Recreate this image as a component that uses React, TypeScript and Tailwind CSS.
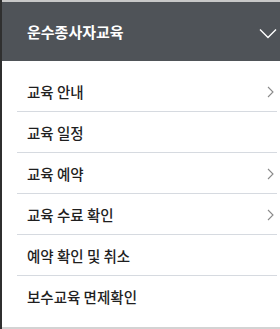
import React from "react";

const items: { label: string; arrow: boolean }[] = [
  { label: "교육 안내", arrow: true },
  { label: "교육 일정", arrow: false },
  { label: "교육 예약", arrow: true },
  { label: "교육 수료 확인", arrow: true },
  { label: "예약 확인 및 취소", arrow: false },
  { label: "보수교육 면제확인", arrow: false },
];

export default function App() {
  return (
    <div
      className="flex w-[280px] h-[329px] bg-white overflow-hidden"
      style={{ fontFamily: '"Noto Sans CJK KR", "Noto Sans", sans-serif' }}
    >
      <div className="w-[2px] shrink-0 bg-[#2f2f2f]" />
      <div className="flex flex-col flex-1 min-w-0">
        <div className="h-[2px] bg-[#c8c8c8]" />
        <div className="h-[59px] bg-[#4f5358] flex items-center justify-between pl-[25px] pr-[3px]">
          <span className="text-white font-bold text-[15px] leading-none">
            운수종사자교육
          </span>
          <svg width="18" height="11" viewBox="0 0 18 11" className="mt-[3px]">
            <path d="M1 1.5 L9 9.5 L17 1.5" fill="none" stroke="#ffffff" strokeWidth="1.4" />
          </svg>
        </div>
        <div className="flex flex-col pt-[10px] pb-[10px] border-b-2 border-[#d3d3d3]">
          {items.map((it, i) => (
            <div
              key={it.label}
              className={`ml-[15px] mr-[3px] h-[41px] flex items-center justify-between pl-[10px] ${
                i < items.length - 1 ? "border-b border-[#d6dae0]" : ""
              }`}
            >
              <span className="text-[14.5px] font-medium text-[#1f1f1f] leading-none pt-[2px]">{it.label}</span>
              {it.arrow && (
                <svg width="7" height="12" viewBox="0 0 7 12" className="mr-[3px] mt-[1px]">
                  <path d="M1 1 L6 6 L1 11" fill="none" stroke="#8a8a8a" strokeWidth="1.1" />
                </svg>
              )}
            </div>
          ))}
        </div>
      </div>
    </div>
  );
}
